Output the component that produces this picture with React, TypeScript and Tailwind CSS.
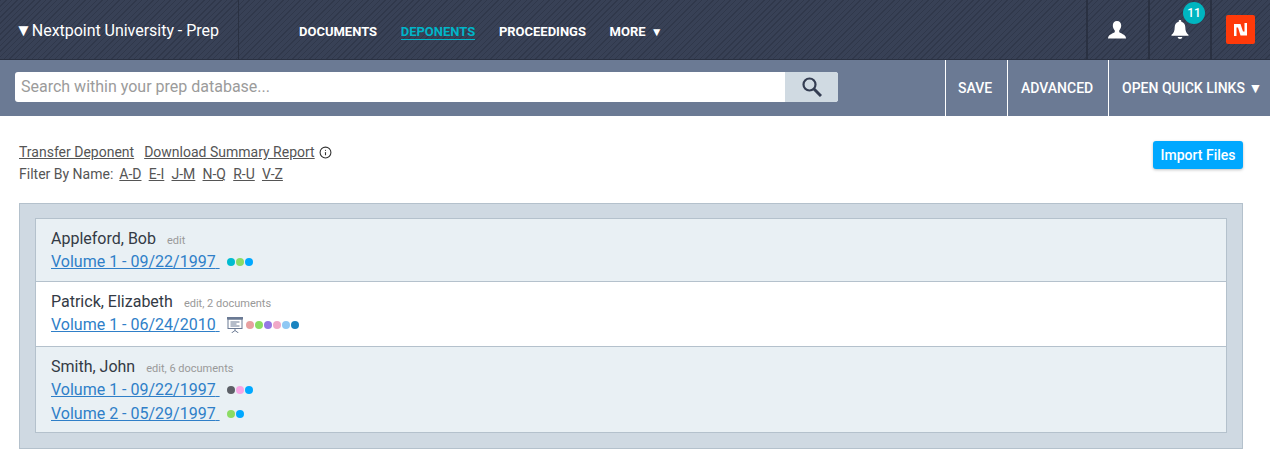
import { Info } from 'lucide-react';

const NAV_ITEMS = ['DOCUMENTS', 'DEPONENTS', 'PROCEEDINGS'];
const FILTERS = ['A-D', 'E-I', 'J-M', 'N-Q', 'R-U', 'V-Z'];

const DEPONENTS = [
  {
    name: 'Appleford, Bob',
    meta: 'edit',
    rowClass: 'bg-[#e9f0f4] h-[62px] pt-[10px]',
    volumes: [{ label: 'Volume 1 - 09/22/1997', dots: ['#00bcd0', '#8cdc64', '#00a8ff'], board: false }],
  },
  {
    name: 'Patrick, Elizabeth',
    meta: 'edit, 2 documents',
    rowClass: 'bg-white h-[66px] pt-[10px] border-y border-[#b4c1cc]',
    volumes: [
      { label: 'Volume 1 - 06/24/2010', dots: ['#e8a0a0', '#8cdc64', '#9578e4', '#f0a8c8', '#90c8f4', '#1a84c0'], board: true },
    ],
  },
  {
    name: 'Smith, John',
    meta: 'edit, 6 documents',
    rowClass: 'bg-[#e9f0f4] h-[85px] pt-[10px]',
    volumes: [
      { label: 'Volume 1 - 09/22/1997', dots: ['#5c5f66', '#f8a4e4', '#00a8ff'], board: false },
      { label: 'Volume 2 - 05/29/1997', dots: ['#8cdc64', '#00a8ff'], board: false },
    ],
  },
];

function BoardIcon() {
  return (
    <svg width="16" height="16" viewBox="0 0 16 16" className="mr-[3px]" fill="none">
      <rect x="0" y="0" width="16" height="2.5" fill="#6b7a94" />
      <rect x="1" y="2" width="14" height="9.5" stroke="#6b7a94" strokeWidth="1" />
      <path d="M3.5 5h9M3.5 7h6M3.5 9h9" stroke="#6b7a94" strokeWidth="1" />
      <path d="M8 12v1.5M8 13.5L4.5 16M8 13.5l3.5 2.5" stroke="#6b7a94" strokeWidth="1" />
    </svg>
  );
}

export default function App() {
  return (
    <div className="w-[1270px] h-[456px] overflow-hidden bg-white font-['Roboto',sans-serif]">
      {/* Top bar */}
      <div className="h-[60px] flex bg-[#363f54] bg-[repeating-linear-gradient(135deg,#30384b_0px,#30384b_1px,#384156_1px,#384156_4px)] text-white border-b border-[#2a3142]">
        <div className="w-[239px] border-r border-[#2a3142] pl-[15px] pt-[20px] text-[16px] leading-[20px] tracking-[-0.03px]">
          <span className="text-[17px]">▼</span>Nextpoint University - Prep
        </div>
        <div className="flex-1 flex items-start gap-[23.6px] pl-[60px] pt-[24px] text-[13px] leading-[15px] font-bold">
          {NAV_ITEMS.map((item) => (
            <span
              key={item}
              className={item === 'DEPONENTS' ? 'text-[#00b5c8] border-b border-[#00b5c8]' : ''}
            >
              {item}
            </span>
          ))}
          <span>
            MORE <span className="text-[12px] ml-[2px]">▼</span>
          </span>
        </div>
        <div className="w-[62px] border-l-2 border-[#2a3142] flex items-center justify-center pr-[2px]">
          <svg width="18" height="18" viewBox="0 0 18 18" fill="#fff">
            <path d="M9 0c2.6 0 4.2 2 4.2 4.6 0 2-.9 3.8-2 4.8v1.6c0 .8 4.8 2 6.3 4.4.3.5.5 1.3.5 2.1H0c0-.8.2-1.6.5-2.1C2 13 6.8 11.8 6.8 11V9.4c-1.1-1-2-2.8-2-4.8C4.8 2 6.4 0 9 0z" />
          </svg>
        </div>
        <div className="relative w-[62px] border-l-2 border-[#2a3142] flex items-center justify-center pr-[1px]">
          <svg width="18" height="19" viewBox="0 0 18 19" fill="#fff">
            <path d="M9 0c.8 0 1.3.5 1.3 1.2v.6c2.7.6 4 2.8 4 5.4 0 4 1 5.6 3.2 7.6v1H.5v-1c2.2-2 3.2-3.6 3.2-7.6 0-2.6 1.3-4.8 4-5.4v-.6C7.7.5 8.2 0 9 0zM6.7 17h4.6c0 1.2-1 2-2.3 2s-2.3-.8-2.3-2z" />
          </svg>
          <span className="absolute left-[33px] top-[2px] w-[22px] h-[22px] rounded-full bg-[#00b5c0] text-[12px] font-medium leading-[22px] text-center">
            11
          </span>
        </div>
        <div className="w-[60px] border-l-2 border-[#2a3142] flex items-start justify-center pt-[15px] pr-[1px]">
          <div className="w-[29px] h-[29px] rounded-[2px] bg-[#ff3a0a] flex items-center justify-center">
            <svg width="13" height="13" viewBox="0 0 13 13" fill="#fff">
              <path d="M0 1h6.5L9 8.5h1.5V0H13v12.5H6.5L4 4.5H2.5V13H0z" />
            </svg>
          </div>
        </div>
      </div>

      {/* Search bar */}
      <div className="h-[56px] flex bg-[#6b7a94] text-white">
        <div className="w-[945px] pl-[15px] pt-[12px]">
          <div className="w-[823px] h-[30px] rounded-[3px] bg-white flex overflow-hidden">
            <div className="flex-1 pl-[6px] text-[16px] leading-[29px] text-[#9b9b9b]">
              Search within your prep database...
            </div>
            <div className="w-[53px] bg-[#d0dae2] flex items-center justify-center">
              <svg width="20" height="20" viewBox="0 0 20 20" fill="none" stroke="#343d52" strokeWidth="2.2">
                <circle cx="7.5" cy="7.5" r="6" />
                <path d="M12 12l7 7" strokeWidth="3" />
              </svg>
            </div>
          </div>
        </div>
        <div className="w-[62px] border-l border-white pl-[12px] text-[14px] font-medium leading-[56px]">SAVE</div>
        <div className="w-[101px] border-l border-white pl-[13px] text-[14px] font-medium leading-[56px]">
          ADVANCED
        </div>
        <div className="flex-1 border-l border-white pl-[13px] text-[14px] font-medium leading-[56px]">
          OPEN QUICK LINKS <span className="text-[14px]">▼</span>
        </div>
      </div>

      {/* Content */}
      <div className="px-[19px] pt-[27px] pr-[27px]">
        <div className="flex justify-between h-[60px]">
          <div className="text-[14px] leading-[18px] text-[#555]">
            <div className="flex items-center">
              <span className="underline">Transfer Deponent</span>
              <span className="underline ml-[10px]">Download Summary Report</span>
              <Info size={13} className="ml-[4px] text-[#333]" />
            </div>
            <div className="flex mt-[4px]">
              <span>Filter By Name:</span>
              <span className="flex gap-[7.2px] ml-[6px]">
                {FILTERS.map((f) => (
                  <span key={f} className="underline">{f}</span>
                ))}
              </span>
            </div>
          </div>
          <button className="w-[90px] h-[28px] mt-[-2px] rounded-[3px] bg-[#00a8ff] text-white text-[14px] font-medium shadow-[0_1px_3px_rgba(0,0,0,0.25)]">
            Import Files
          </button>
        </div>

        {/* Deponent list */}
        <div className="h-[246px] border border-[#b4c1cc] bg-[#cfd9e2] px-[15px] py-[14px]">
          <div className="border border-[#b4c1cc]">
            {DEPONENTS.map((d) => (
              <div key={d.name} className={`pl-[15px] ${d.rowClass}`}>
                <div className="flex items-baseline text-[16px] leading-[20px] text-[#333a45]">
                  {d.name}
                  <span className="ml-[11px] text-[11px] text-[#999]">{d.meta}</span>
                </div>
                <div className="mt-[-2px]">
                  {d.volumes.map((v) => (
                    <div key={v.label} className="flex items-center h-[23px] mt-[1px]">
                      <span className="underline whitespace-pre text-[16px] leading-[20px] text-[#2f7fc8]">{v.label} </span>
                      <span className="flex items-center ml-[7px]">
                        {v.board && <BoardIcon />}
                        <span className="flex gap-px">
                          {v.dots.map((c, i) => (
                            <span key={i} className="w-[8px] h-[8px] rounded-full" style={{ backgroundColor: c }} />
                          ))}
                        </span>
                      </span>
                    </div>
                  ))}
                </div>
              </div>
            ))}
          </div>
        </div>
      </div>
    </div>
  );
}
